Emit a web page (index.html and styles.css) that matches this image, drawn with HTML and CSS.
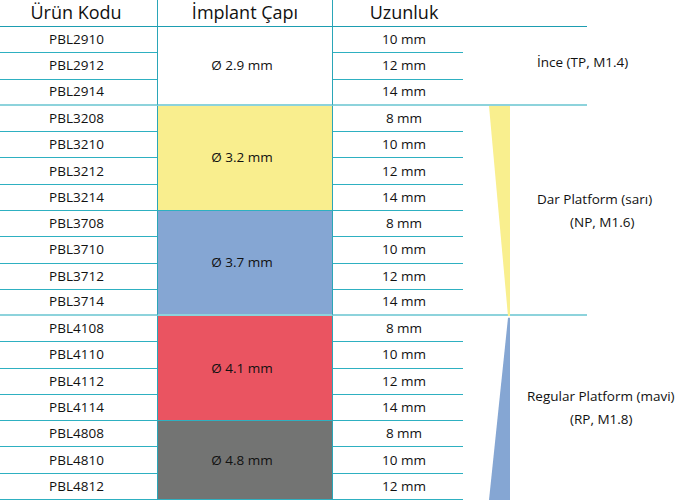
FILE: index.html
```html
<!DOCTYPE html>
<html lang="tr">
<head>
<meta charset="utf-8">
<title>İmplant Tablosu</title>
<link rel="stylesheet" href="styles.css">
</head>
<body>
<div class="sheet">
  <div class="col c1">
    <div class="hd">Ürün Kodu</div>
    <div class="cell">PBL2910</div>
    <div class="cell">PBL2912</div>
    <div class="cell end">PBL2914</div>
    <div class="cell">PBL3208</div>
    <div class="cell">PBL3210</div>
    <div class="cell">PBL3212</div>
    <div class="cell">PBL3214</div>
    <div class="cell">PBL3708</div>
    <div class="cell">PBL3710</div>
    <div class="cell">PBL3712</div>
    <div class="cell end">PBL3714</div>
    <div class="cell">PBL4108</div>
    <div class="cell">PBL4110</div>
    <div class="cell">PBL4112</div>
    <div class="cell">PBL4114</div>
    <div class="cell">PBL4808</div>
    <div class="cell">PBL4810</div>
    <div class="cell">PBL4812</div>
  </div>
  <div class="col c2">
    <div class="hd">İmplant Çapı</div>
    <div class="cell s3 end">Ø 2.9 mm</div>
    <div class="cell s4 yellow">Ø 3.2 mm</div>
    <div class="cell s4 blue end">Ø 3.7 mm</div>
    <div class="cell s4 red">Ø 4.1 mm</div>
    <div class="cell s3 gray">Ø 4.8 mm</div>
  </div>
  <div class="col c3">
    <div class="hd">Uzunluk</div>
    <div class="cell">10 mm</div>
    <div class="cell">12 mm</div>
    <div class="cell end">14 mm</div>
    <div class="cell">8 mm</div>
    <div class="cell">10 mm</div>
    <div class="cell">12 mm</div>
    <div class="cell">14 mm</div>
    <div class="cell">8 mm</div>
    <div class="cell">10 mm</div>
    <div class="cell">12 mm</div>
    <div class="cell end">14 mm</div>
    <div class="cell">8 mm</div>
    <div class="cell">10 mm</div>
    <div class="cell">12 mm</div>
    <div class="cell">14 mm</div>
    <div class="cell">8 mm</div>
    <div class="cell">10 mm</div>
    <div class="cell">12 mm</div>
  </div>
  <div class="col c4">
    <div class="hd"></div>
    <div class="grp s3 sep">
      <span class="tri"></span>
      <div class="lbl ince"><span class="i10">İnce (TP, M1.4)</span></div>
    </div>
    <div class="grp s8 sep">
      <svg class="tri" viewBox="0 0 21 100" preserveAspectRatio="none"><polygon points="0,0 21,0 21,100 19,100" fill="#f9ef8e"/></svg>
      <div class="lbl"><span class="i10">Dar Platform (sarı)</span><span class="i43">(NP, M1.6)</span></div>
    </div>
    <div class="grp s7">
      <svg class="tri" viewBox="0 0 21 100" preserveAspectRatio="none"><polygon points="19,1 21,1 21,100 0,100" fill="#85a6d3"/></svg>
      <div class="lbl"><span>Regular Platform (mavi)</span><span class="i43">(RP, M1.8)</span></div>
    </div>
  </div>
</div>
</body>
</html>
```

FILE: styles.css
```css
* {
  box-sizing: border-box;
}

body {
  margin: 0;
  background: #ffffff;
  font-family: "Open Sans", "Noto Sans", sans-serif;
  color: #111111;
}

.sheet {
  display: grid;
  grid-template-columns: 157px 176px 130px 216px;
  width: 679px;
  height: 500px;
}

.col {
  display: grid;
  grid-template-rows: 27px repeat(18, 1fr);
}

.hd {
  font-size: 18px;
  line-height: 22px;
  padding-top: 1px;
  text-align: center;
  white-space: nowrap;
  border-bottom: 1px solid #1d9db1;
}

.cell {
  display: flex;
  align-items: center;
  justify-content: center;
  font-size: 13.5px;
  padding-bottom: 1px;
  white-space: nowrap;
  border-bottom: 1px solid #2eb0c1;
}

.cell.end {
  border-bottom: 2px solid #8dd3dc;
}

.c1 .cell {
  padding-right: 4px;
}

.c1 .hd {
  padding-right: 5px;
}

.c3 .cell,
.c3 .hd {
  padding-left: 12px;
}

.c2 > div {
  border-left: 1px solid #2aa6b8;
  border-right: 1px solid #2aa6b8;
}

.c2 .cell {
  padding-right: 6px;
}

.s3 { grid-row: span 3; }
.s4 { grid-row: span 4; }
.s7 { grid-row: span 7; }
.s8 { grid-row: span 8; }

.yellow { background: #f9ee8e; }
.blue { background: #85a6d3; }
.red { background: #ea5461; }
.gray { background: #737473; }

.c4 .hd {
  width: 124px;
}

.grp {
  display: flex;
  align-items: center;
}

.grp.sep {
  background: linear-gradient(#8dd3dc, #8dd3dc) no-repeat left bottom / 124px 2px;
}

.tri {
  display: block;
  flex: none;
  width: 21px;
  height: 100%;
  margin-left: 26px;
}

.lbl {
  margin-left: 17px;
  font-size: 13.5px;
  line-height: 23px;
  white-space: nowrap;
}

.lbl.ince {
  margin-bottom: 8px;
}

.lbl span {
  display: block;
}

.i10 { padding-left: 10px; }
.i43 { padding-left: 43px; }
```
